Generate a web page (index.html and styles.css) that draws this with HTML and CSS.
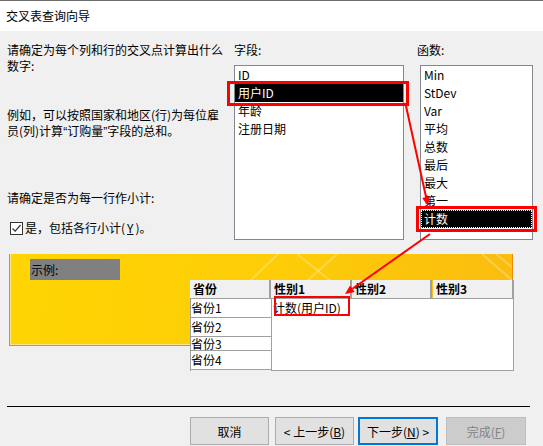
FILE: index.html
```html
<!DOCTYPE html>
<html lang="zh-CN">
<head>
  <meta charset="UTF-8">
  <title>交叉表查询向导</title>
  <link rel="stylesheet" href="styles.css">
</head>
<body>
  <div class="titlebar">交叉表查询向导</div>

  <div class="top">
    <div class="intro">
      <p>请确定为每个列和行的交叉点计算出什么<br>数字:</p>
      <p class="hint">例如，可以按照国家和地区(行)为每位雇<br>员(列)计算<span class="q">“</span>订购量<span class="q">”</span>字段的总和。</p>
      <p class="q2">请确定是否为每一行作小计:</p>
      <label class="check">
        <span class="box"><svg width="11" height="11" viewBox="0 0 11 11"><path d="M1.5 5.5 L4.2 8.2 L9.5 2" fill="none" stroke="#333" stroke-width="1.2"/></svg></span>
        是，包括各行小计(<u>Y</u>)。
      </label>
    </div>

    <div class="col fields">
      <div class="label">字段:</div>
      <ul class="list">
        <li>ID</li>
        <li class="sel">用户ID</li>
        <li>年龄</li>
        <li>注册日期</li>
      </ul>
    </div>

    <div class="col funcs">
      <div class="label">函数:</div>
      <ul class="list">
        <li>Min</li>
        <li>StDev</li>
        <li>Var</li>
        <li>平均</li>
        <li>总数</li>
        <li>最后</li>
        <li>最大</li>
        <li>第一</li>
        <li class="sel">计数</li>
      </ul>
    </div>
  </div>

  <div class="sample">
    <div class="banner">
      <svg class="deco" width="503" height="91" viewBox="0 0 503 91">
        <g stroke="#fff" stroke-opacity="0.25" stroke-width="2">
          <line x1="241" y1="26" x2="268" y2="0"/>
          <line x1="287" y1="0" x2="322" y2="28"/>
          <line x1="327" y1="0" x2="296" y2="28"/>
          <line x1="472" y1="0" x2="503" y2="27"/>
          <line x1="486" y1="0" x2="503" y2="14"/>
        </g>
      </svg>
      <span class="tag">示例:</span>
    </div>

    <div class="grid">
      <div class="ghead">
        <span>省份</span>
        <span>性别1</span>
        <span class="c3">性别2</span>
        <span class="c4">性别3</span>
      </div>
      <div class="gbody">
        <div class="rows">
          <div>省份1</div>
          <div>省份2</div>
          <div class="short">省份3</div>
          <div class="last">省份4</div>
        </div>
        <div class="area">计数(用户ID)</div>
      </div>
    </div>
  </div>

  <div class="sep"></div>

  <div class="buttons">
    <button class="btn">取消</button>
    <button class="btn back">&lt; 上一步(<u>B</u>)</button>
    <button class="btn next">下一步(<u>N</u>) &gt;</button>
    <button class="btn done">完成(<u>F</u>)</button>
  </div>

  <svg class="marks" width="543" height="446" viewBox="0 0 543 446">
    <g fill="none" stroke="#f00">
      <rect x="228.5" y="82.5" width="179" height="22" stroke-width="3"/>
      <rect x="417.5" y="207.5" width="118" height="23" stroke-width="3"/>
      <rect x="275" y="297" width="74" height="18" stroke-width="2"/>
      <line x1="406" y1="106" x2="426.1" y2="197.2" stroke-width="2"/>
      <line x1="430" y1="234" x2="352.4" y2="288.8" stroke-width="2"/>
    </g>
    <g fill="#f00">
      <polygon points="428,206 430,196.3 422.2,198.1"/>
      <polygon points="345,294 354.7,292.1 350.1,285.5"/>
    </g>
  </svg>
</body>
</html>
```

FILE: styles.css
```css
* { box-sizing: border-box; }
body { margin: 0; width: 543px; height: 446px; overflow: hidden; position: relative; background: #f0f0f0; color: #000; font-family: "Noto Sans CJK SC", "Liberation Sans", sans-serif; font-size: 12px; }
p { margin: 0; }

.titlebar { height: 31px; border-top: 1px solid #6d6d6d; background: #fff; padding-left: 6px; line-height: 30px; }

.top { display: flex; padding-top: 11px; }
.intro { width: 234px; padding-left: 7px; line-height: 16px; white-space: nowrap; }
.hint { margin-top: 33px; }
.hint .q { font-family: "Liberation Sans", sans-serif; }
.q2 { margin-top: 50px; }
.check { display: flex; align-items: center; gap: 2px; margin-top: 14px; padding-left: 3px; height: 16px; }
.check .box { width: 13px; height: 13px; border: 1px solid #333; background: #fff; display: flex; align-items: center; justify-content: center; }
.check u { text-decoration-thickness: 1px; }

.fields { width: 170px; }
.funcs { width: 113px; margin-left: 16px; }
.label { line-height: 16px; }
.funcs .label { margin-left: -3px; }
.list { list-style: none; margin: 7px 0 0; padding: 0; height: 175px; background: #fff; border: 1px solid #828790; }
.list li { height: 18px; line-height: 18px; padding-left: 3px; white-space: nowrap; }
.list .sel { background: #000; color: #fff; }
.funcs .sel { outline: 1px dotted #fff; outline-offset: -1px; }

.sample { position: relative; margin-top: 14px; height: 152px; }
.banner { position: relative; margin-left: 9px; width: 504px; height: 92px; padding: 5px 0 0 20px; border: 1px solid #f18a00; border-top: 0; box-shadow: inset 1px -1px 0 #fde58c; background: linear-gradient(100deg, #ffd502 0%, #fdcc08 55%, #fabc10 100%); overflow: hidden; }
.deco { position: absolute; left: 0; top: 0; }
.tag { position: relative; display: block; width: 90px; height: 21px; line-height: 21px; padding-left: 1px; background: #808080; }

.grid { position: absolute; left: 190px; top: 26px; width: 324px; }
.ghead { display: flex; height: 18px; }
.ghead span { width: 81px; padding-left: 3px; line-height: 18px; font-weight: bold; background: #f0f0f0; border-right: 2px solid #a0a0a0; }
.ghead .c3 { width: 80px; }
.ghead .c4 { margin-left: 1px; }
.gbody { display: flex; }
.rows { width: 81px; border-left: 1px solid #a0a0a0; }
.rows div { height: 19px; line-height: 18px; border-top: 1px solid #a0a0a0; background: #fff; overflow: hidden; }
.rows .short { height: 14px; line-height: 13px; overflow: visible; }
.rows .last { position: relative; height: 20px; border-bottom: 1px solid #a0a0a0; }
.area { width: 243px; height: 73px; padding-left: 1px; line-height: 18px; background: #fff; border: 1px solid #a0a0a0; }

.sep { height: 1px; margin: 0 13px 0 7px; background: #000; }

.buttons { display: flex; padding-left: 190px; margin-top: 10px; }
.btn { width: 79px; height: 28px; padding: 0; font: inherit; color: #000; background: #e1e1e1; border: 1px solid #adadad; }
.back { margin-left: 6px; }
.next { width: 80px; margin-left: 4px; border: 2px solid #0078d7; }
.done { width: 80px; margin-left: 8px; color: #838383; background: #cccccc; border-color: #bfbfbf; }

.marks { position: absolute; left: 0; top: 0; pointer-events: none; }
```
